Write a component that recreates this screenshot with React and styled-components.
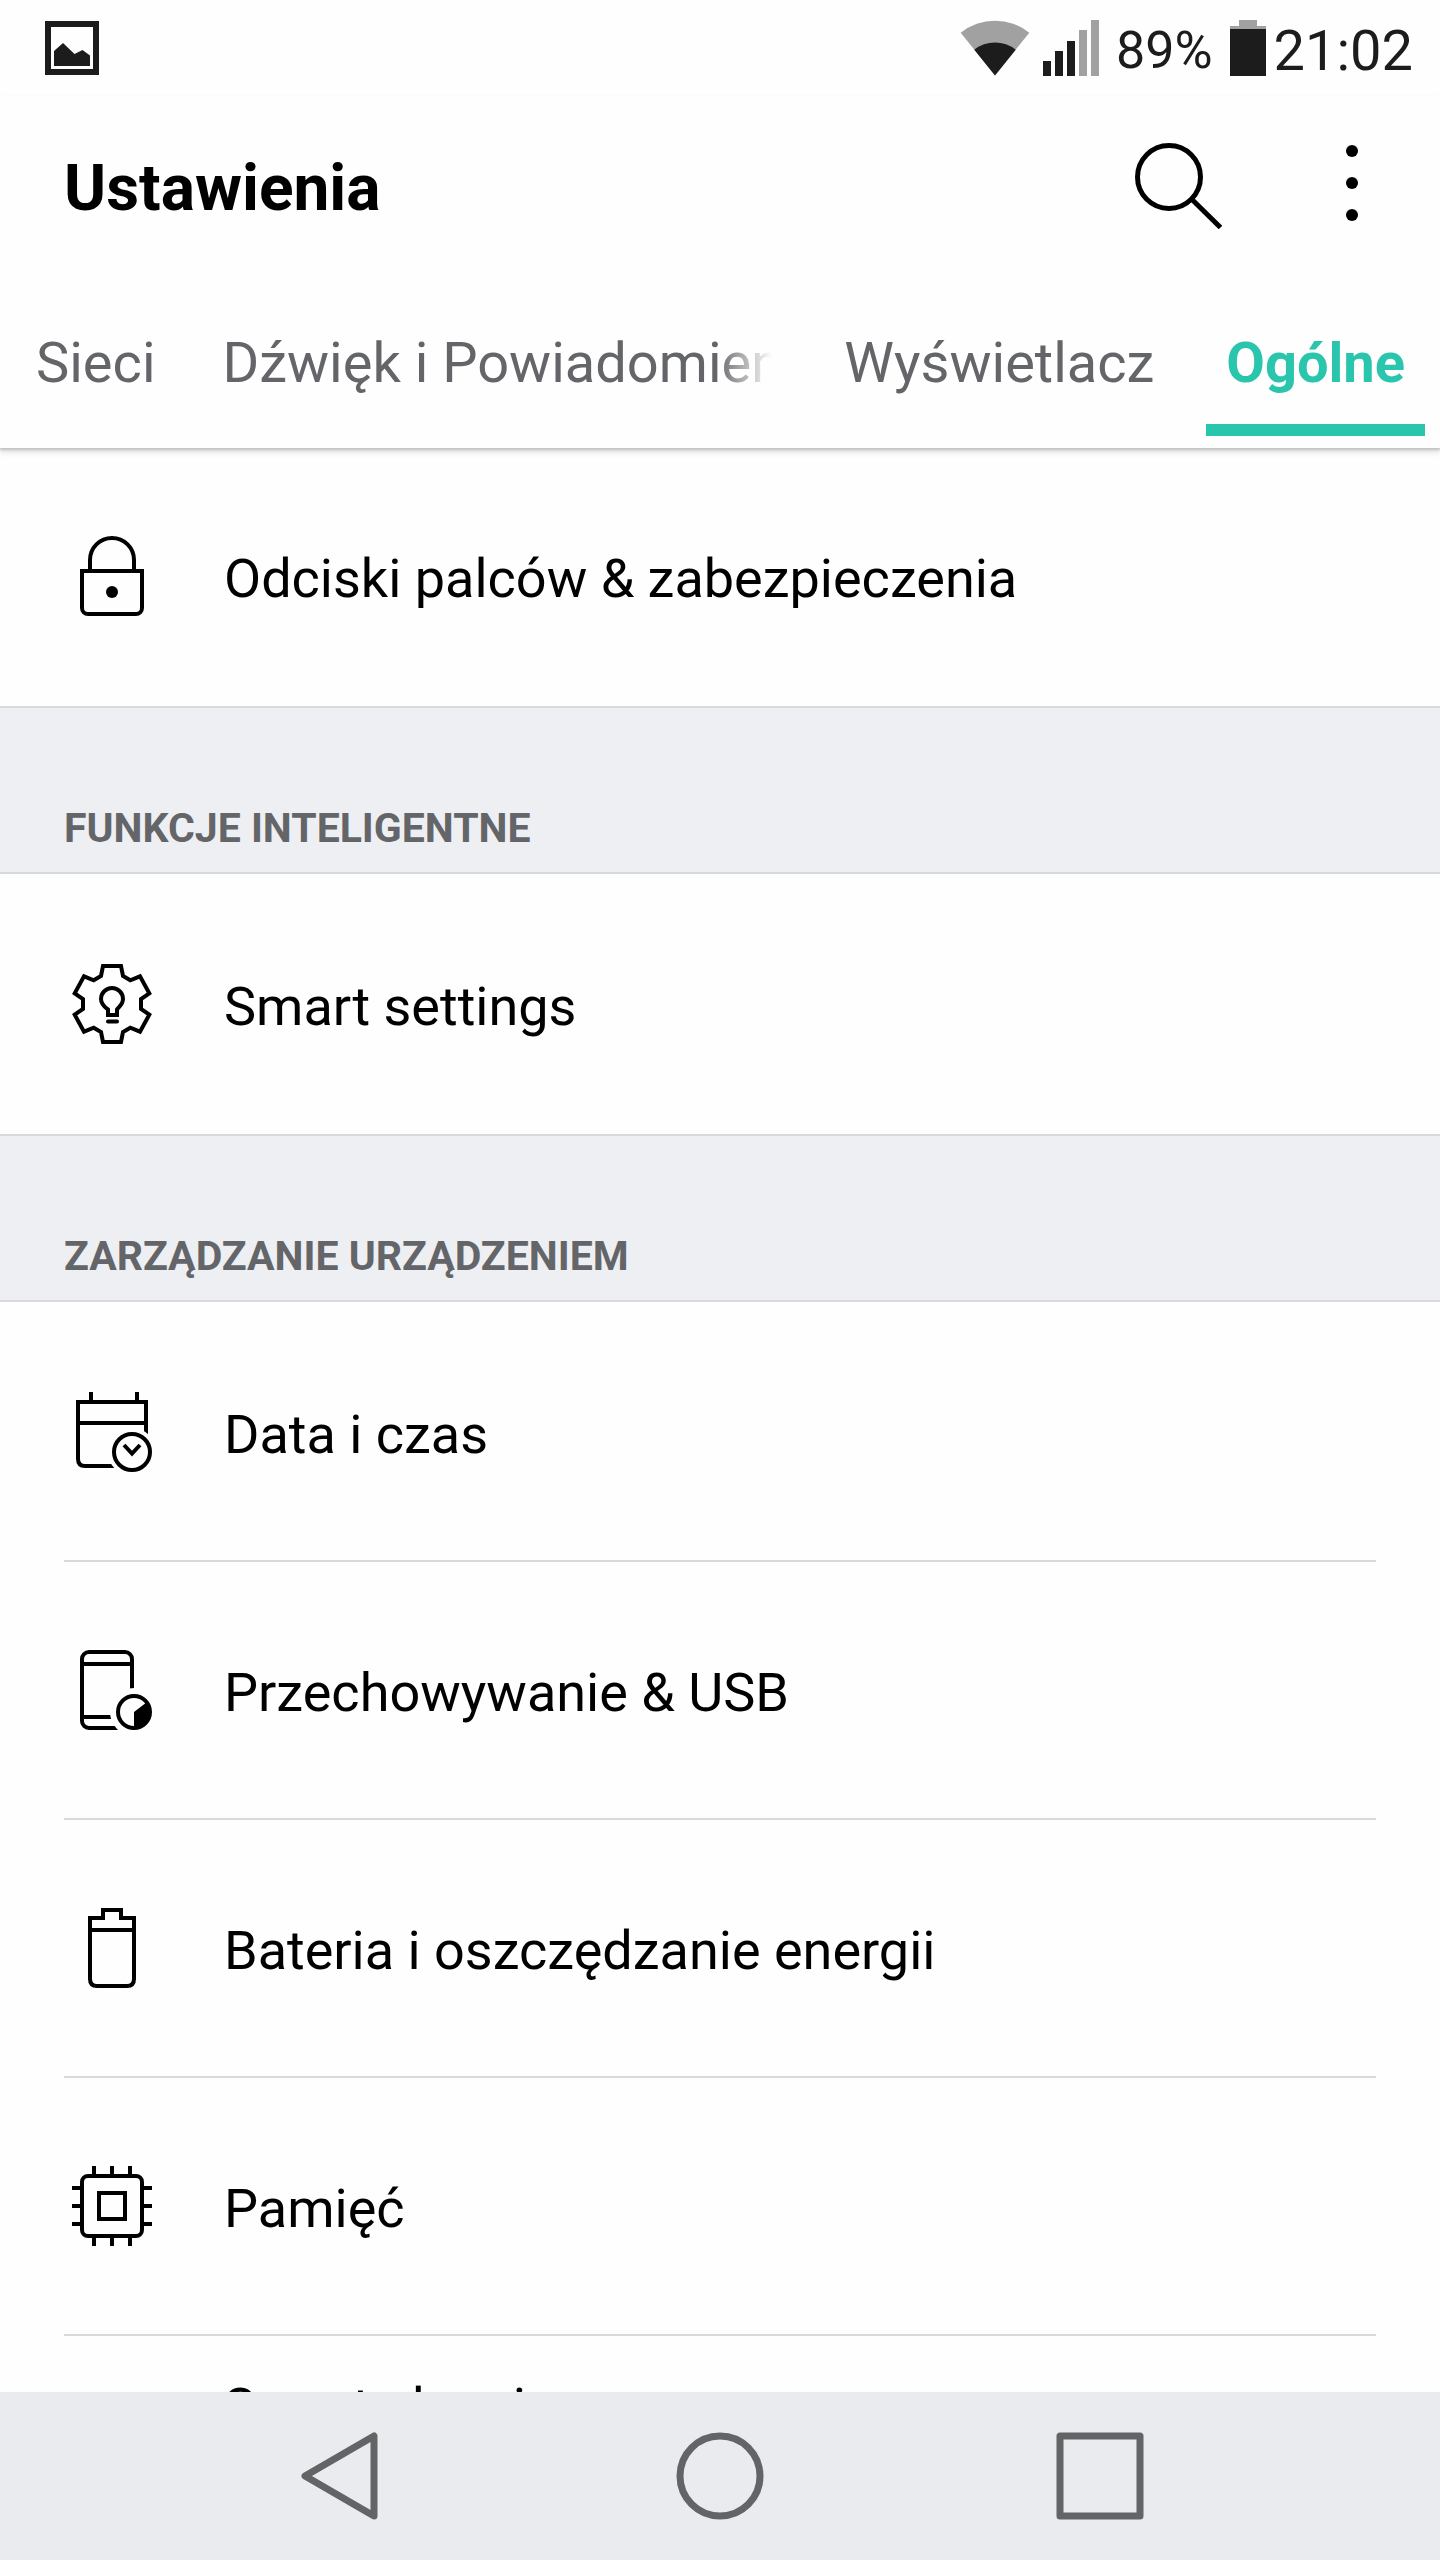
import React, { useState } from "react";
import styled, { createGlobalStyle, css } from "styled-components";

const GlobalStyle = createGlobalStyle`
  * {
    box-sizing: border-box;
  }

  body {
    margin: 0;
    background: #fefefe;
    color: #000;
    font-family: Roboto, "Noto Sans", sans-serif;
  }
`;

const resetButton = css`
  margin: 0;
  padding: 0;
  border: 0;
  background: none;
  color: inherit;
  font: inherit;
  cursor: pointer;
`;

const Screen = styled.div`
  display: flex;
  flex-direction: column;
  height: 100vh;
  overflow: hidden;
`;

const StatusBar = styled.div`
  display: flex;
  flex: none;
  align-items: center;
  justify-content: space-between;
  height: 96px;
  padding: 0 27px 0 45px;
  color: #1c1c1c;
`;

const StatusGroup = styled.div`
  display: flex;
  align-items: center;
  gap: ${props => props.$gap}px;
`;

const StatusText = styled.span`
  padding-top: 6px;
  font-size: ${props => props.$size}px;
  line-height: 64px;
`;

const AppBar = styled.header`
  flex: none;
  position: relative;
  box-shadow: 0 2px 2px #c4c4c4, 0 4px 6px #dcdcdc;
`;

const TitleRow = styled.div`
  display: flex;
  align-items: center;
  justify-content: space-between;
  height: 180px;
  padding: 0 64px;
`;

const Title = styled.h1`
  margin: 0;
  padding-top: 6px;
  font-size: 64px;
  font-weight: 700;
  line-height: 76px;
`;

const Actions = styled.div`
  display: flex;
  gap: 105px;
`;

const IconButton = styled.button`
  ${resetButton}
  display: flex;
`;

const TabList = styled.div`
  display: flex;
  gap: 32px;
  height: 172px;
  padding: 0 15px 12px 16px;
`;

const Tab = styled.button`
  ${resetButton}
  flex: 0 ${props => (props.$shrink ? 1 : 0)} auto;
  min-width: 0;
  padding: 26px 20px 0 ${props => (props.$shrink ? 15 : 20)}px;
  border-bottom: 12px solid ${props => (props.$active ? "#29c5ac" : "transparent")};
  color: ${props => (props.$active ? "#29c5ac" : "#646569")};
  font-size: 56px;
  font-weight: ${props => (props.$active ? 700 : 400)};
  line-height: 72px;
`;

const TabLabel = styled.span`
  display: block;
  overflow: hidden;
  white-space: nowrap;
  ${props =>
    props.$shrink &&
    css`
      mask-image: linear-gradient(to left, transparent, #000 56px);
    `}
`;

const Content = styled.main`
  flex: 1;
  min-height: 0;
  overflow: hidden;
`;

const SectionTitle = styled.h2`
  display: flex;
  align-items: flex-end;
  height: 164px;
  margin: 0;
  padding: 0 64px 19px;
  background: #edeff3;
  color: #646569;
  font-size: 41px;
  font-weight: 700;
  line-height: 50px;
`;

const List = styled.ul`
  margin: 0;
  padding: ${props => (props.$first ? 0 : 2)}px 64px 2px;
  border-top: ${props => (props.$first ? 0 : 2)}px solid #d9d9db;
  border-bottom: 2px solid #d9d9db;
  list-style: none;
`;

const Item = styled.li`
  & + & {
    border-top: 2px solid #d9d9db;
  }
`;

const ItemLink = styled.a`
  display: flex;
  align-items: ${props => (props.$tall ? "flex-start" : "center")};
  gap: 72px;
  height: 256px;
  padding: ${props => (props.$tall ? 34 : 0)}px 8px 0;
  color: inherit;
  text-decoration: none;
`;

const ItemIcon = styled.svg`
  flex: none;
  width: 80px;
  height: 80px;
  fill: none;
  stroke: #000;
  stroke-width: 4;
`;

const ItemLabel = styled.span`
  padding-top: 6px;
  font-size: 54px;
  line-height: 64px;
`;

const NavBar = styled.nav`
  display: flex;
  flex: none;
  justify-content: center;
  height: 168px;
  background: #e9ebee;
`;

const NavButton = styled.button`
  ${resetButton}
  display: flex;
  flex: 0 0 26.4%;
  align-items: center;
  justify-content: center;
`;

const NavIcon = styled.svg`
  width: 88px;
  height: 88px;
  fill: none;
  stroke: #636466;
  stroke-width: 7;
  stroke-linejoin: round;
`;

const icons = {
  lock: (
    <>
      <path d="M10 35h60v37a6 6 0 0 1-6 6H16a6 6 0 0 1-6-6z" />
      <path d="M18 35V24a22 22 0 0 1 44 0v11" />
      <circle cx="40" cy="56" r="6" fill="#000" stroke="none" />
    </>
  ),
  smart: (
    <>
      <path d="M31 2h18l2 10 7.300 4.300 9.700-4 9.300 17-8.300 5.700v10l8.300 5.700-9.300 17-9.700-4L51 68l-2 10H31l-2-10-7.300-4.300-9.700 4-9.300-17L11 45V35l-8.300-5.700 9.300-17 9.700 4L29 12z" />
      <path d="M36 51v-5.500c-3.500-2.500-7-5.500-7-10.500a11 11 0 0 1 22 0c0 5-3.500 7.500-6 10.500V51z" />
      <path d="M36 57.500h9" strokeLinecap="round" />
    </>
  ),
  calendar: (
    <>
      <path d="M6 10h68v64H13q-7 0-7-7zM6 31h68M19 0v10M65 0v10" />
      <circle cx="60" cy="60" r="24" fill="#fefefe" stroke="none" />
      <circle cx="60" cy="60" r="18" />
      <path d="M52 53l8 8.500 8-8.500" />
    </>
  ),
  storage: (
    <>
      <rect x="10" y="2" width="50" height="76" rx="7" />
      <path d="M10 14h50M10 67h50" />
      <circle cx="62" cy="62" r="24" fill="#fefefe" stroke="none" />
      <circle cx="62" cy="62" r="16" />
      <path d="M62 62l13-10a16 16 0 0 1-13 26z" fill="#000" stroke="none" />
    </>
  ),
  battery: (
    <path d="M18 10h13V2h18v8h13v61q0 7-7 7H25q-7 0-7-7zM18 22h44" />
  ),
  memory: (
    <>
      <rect x="10" y="10" width="60" height="60" rx="6" />
      <rect x="27" y="27" width="26" height="26" />
      <path d="M22 0v10M40 0v10M58 0v10M22 70v10M40 70v10M58 70v10" />
      <path d="M0 22h10M0 40h10M0 58h10M70 22h10M70 40h10M70 58h10" />
    </>
  )
};

const tabs = [
  { id: "network", label: "Sieci" },
  { id: "sound", label: "Dźwięk i Powiadomienia", shrink: true },
  { id: "display", label: "Wyświetlacz" },
  { id: "general", label: "Ogólne" }
];

const sections = [
  {
    id: "security",
    items: [{ id: "lock", label: "Odciski palców & zabezpieczenia" }]
  },
  {
    id: "smart",
    title: "FUNKCJE INTELIGENTNE",
    items: [{ id: "smart", label: "Smart settings" }]
  },
  {
    id: "device",
    title: "ZARZĄDZANIE URZĄDZENIEM",
    items: [
      { id: "calendar", label: "Data i czas" },
      { id: "storage", label: "Przechowywanie & USB" },
      { id: "battery", label: "Bateria i oszczędzanie energii" },
      { id: "memory", label: "Pamięć" },
      { id: "cleaning", label: "Smart cleaning", tall: true }
    ]
  }
];

const PhotoIcon = () => (
  <svg width="54" height="54" fill="#1c1c1c">
    <path fillRule="evenodd" d="M0 0h54v54H0zM6 6v42h42V6z" />
    <path d="M9 30l9-8 11.500 11 8-4 7.500 5.500V45H9z" />
  </svg>
);

const WifiIcon = () => (
  <svg width="70" height="56">
    <path d="M35 55.500L.700 12.700a55 55 0 0 1 68.600 0z" fill="#a1a1a1" />
    <path d="M35 55.500L14.300 29.700a33 33 0 0 1 41.400 0z" fill="#1c1c1c" />
  </svg>
);

const SignalIcon = () => (
  <svg width="56" height="56">
    <path d="M0 41h8v15H0zM12 31h8v25h-8zM24 21h8v35h-8z" fill="#1c1c1c" />
    <path d="M36 10h8v46h-8zM48 0h8v56h-8z" fill="#a1a1a1" />
  </svg>
);

const BatteryIcon = () => (
  <svg width="36" height="56">
    <path d="M9 0h18v6h9v4H0V6h9z" fill="#a1a1a1" />
    <path d="M0 9h36v47H0z" fill="#1c1c1c" />
  </svg>
);

const SettingsItem = ({ id, label, tall }) => (
  <Item>
    <ItemLink href={`#${id}`} $tall={tall}>
      <ItemIcon viewBox="0 0 80 80" aria-hidden="true">
        {icons[id]}
      </ItemIcon>
      <ItemLabel>{label}</ItemLabel>
    </ItemLink>
  </Item>
);

const App = () => {
  const [active, setActive] = useState("general");

  return (
    <Screen>
      <GlobalStyle />
      <StatusBar>
        <PhotoIcon />
        <StatusGroup $gap={17}>
          <StatusGroup $gap={13}>
            <WifiIcon />
            <SignalIcon />
          </StatusGroup>
          <StatusText $size={52}>89%</StatusText>
          <StatusGroup $gap={8}>
            <BatteryIcon />
            <StatusText $size={56}>21:02</StatusText>
          </StatusGroup>
        </StatusGroup>
      </StatusBar>

      <AppBar>
        <TitleRow>
          <Title>Ustawienia</Title>
          <Actions>
            <IconButton type="button" aria-label="Szukaj">
              <svg width="88" height="86" fill="none" stroke="#000" strokeWidth="5">
                <circle cx="34" cy="34" r="31.500" />
                <path d="M56.500 56l29 28.500" />
              </svg>
            </IconButton>
            <IconButton type="button" aria-label="Więcej opcji">
              <svg width="48" height="86">
                <circle cx="24" cy="8" r="6" />
                <circle cx="24" cy="40" r="6" />
                <circle cx="24" cy="72" r="6" />
              </svg>
            </IconButton>
          </Actions>
        </TitleRow>
        <TabList role="tablist">
          {tabs.map(tab => (
            <Tab
              key={tab.id}
              type="button"
              role="tab"
              aria-selected={active === tab.id}
              $active={active === tab.id}
              $shrink={tab.shrink}
              onClick={() => setActive(tab.id)}
            >
              <TabLabel $shrink={tab.shrink}>{tab.label}</TabLabel>
            </Tab>
          ))}
        </TabList>
      </AppBar>

      <Content>
        {sections.map(section => (
          <section key={section.id}>
            {section.title && <SectionTitle>{section.title}</SectionTitle>}
            <List $first={!section.title}>
              {section.items.map(item => (
                <SettingsItem key={item.id} {...item} />
              ))}
            </List>
          </section>
        ))}
      </Content>

      <NavBar>
        <NavButton type="button" aria-label="Wstecz">
          <NavIcon viewBox="0 0 88 88">
            <path d="M78 4v80L9 44z" />
          </NavIcon>
        </NavButton>
        <NavButton type="button" aria-label="Ekran główny">
          <NavIcon viewBox="0 0 88 88">
            <circle cx="44" cy="44" r="40" />
          </NavIcon>
        </NavButton>
        <NavButton type="button" aria-label="Ostatnie aplikacje">
          <NavIcon viewBox="0 0 88 88">
            <rect x="4" y="4" width="80" height="80" />
          </NavIcon>
        </NavButton>
      </NavBar>
    </Screen>
  );
};

export default App;
